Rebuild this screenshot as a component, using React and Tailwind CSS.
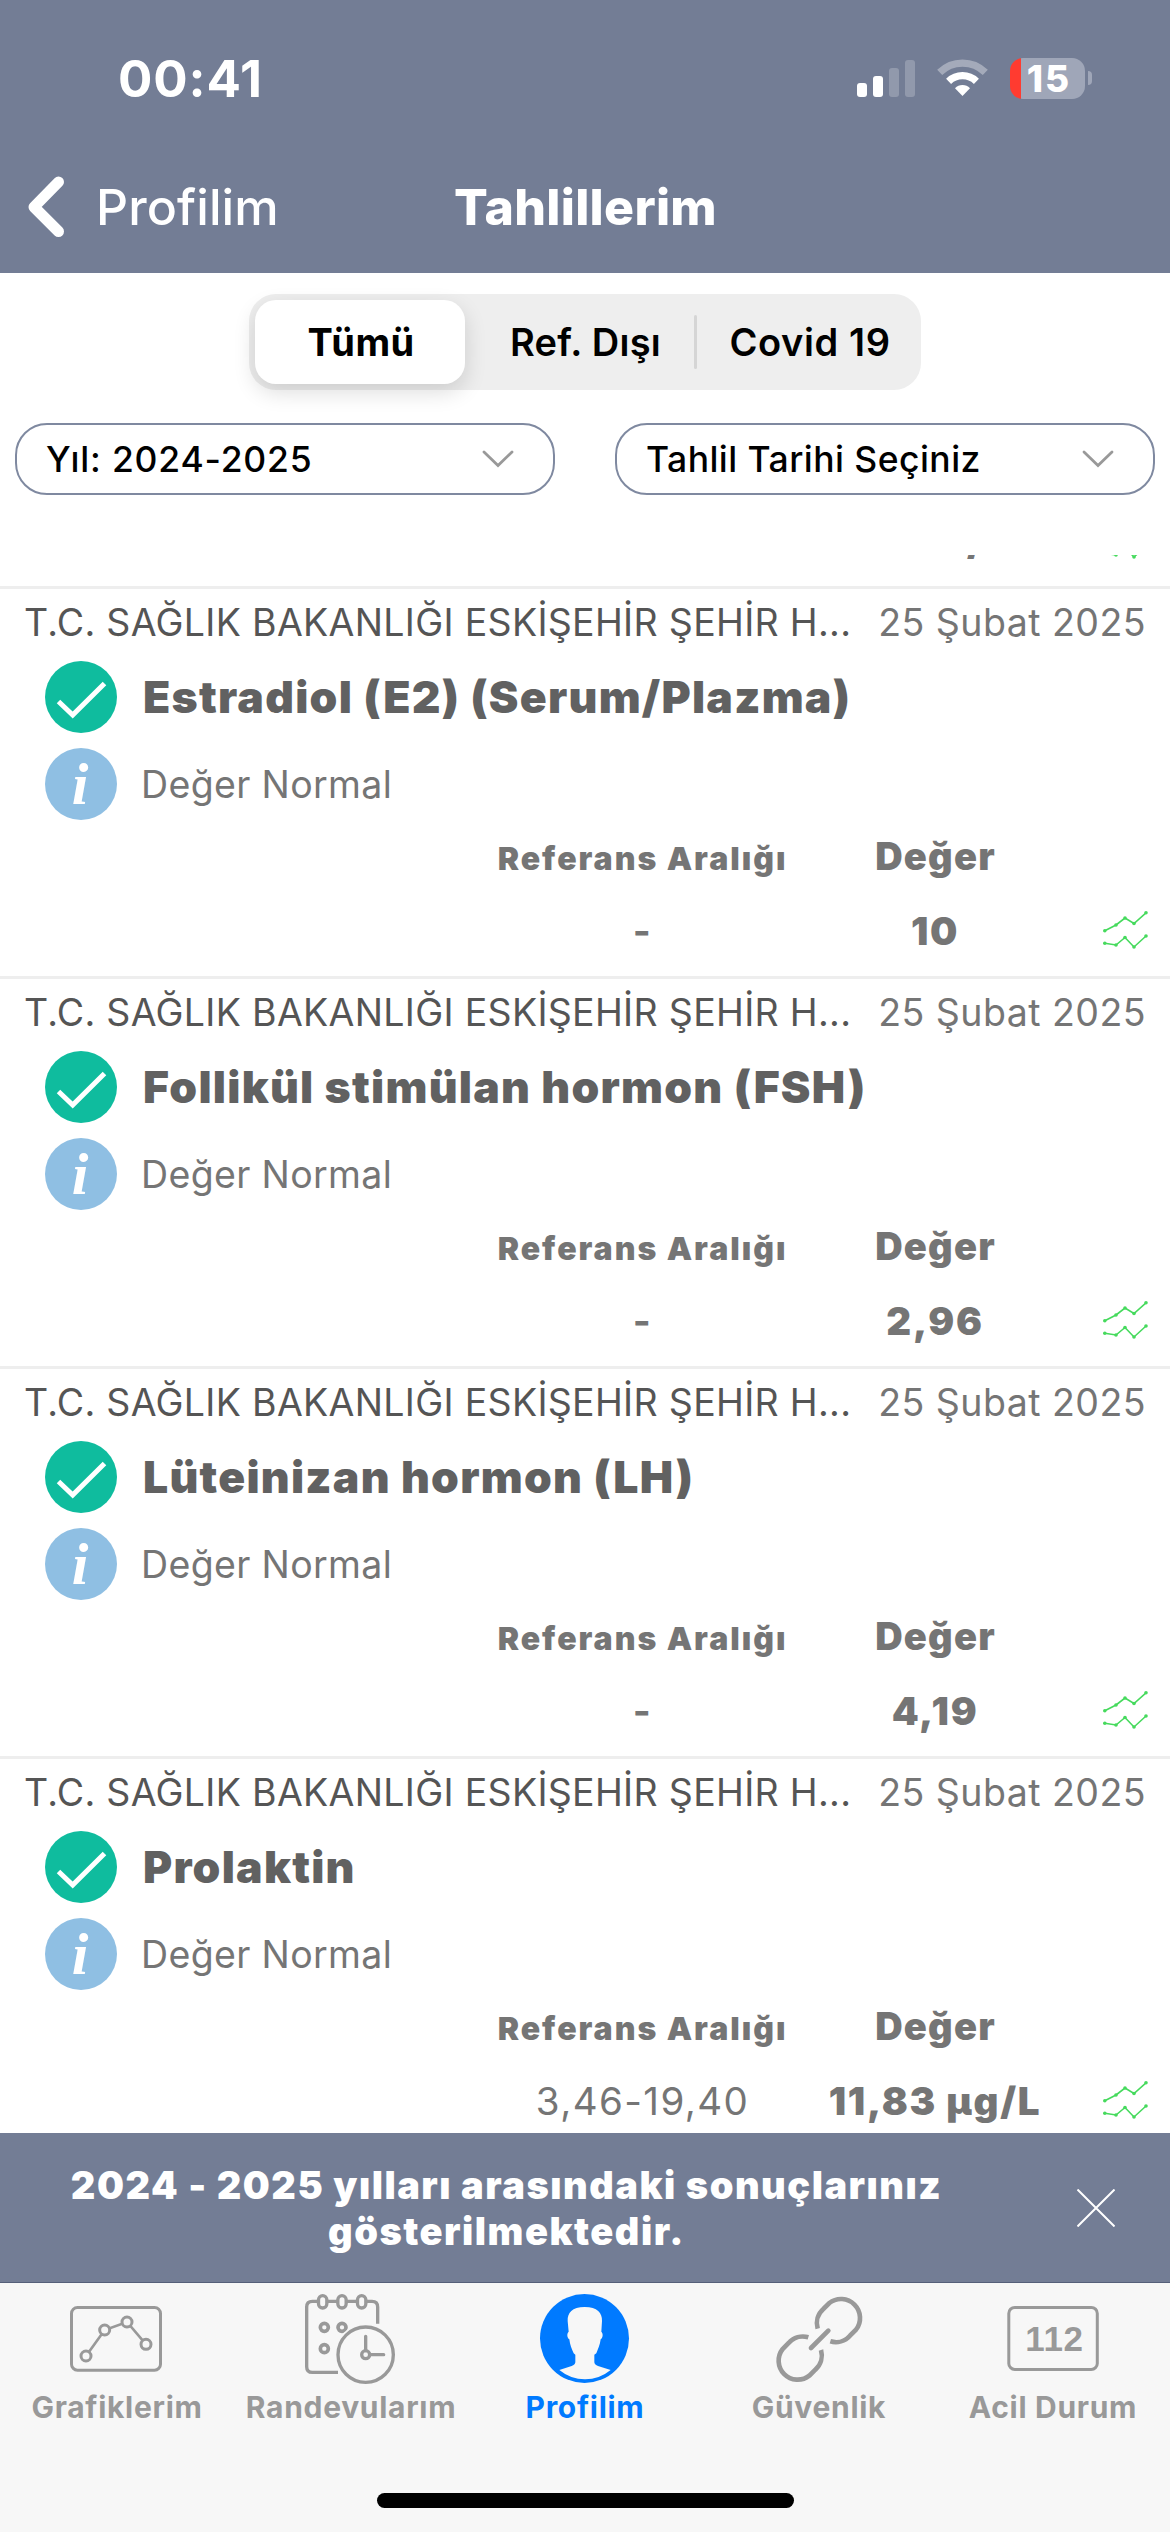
import clsx from "clsx";

const HOSPITAL = "T.C. SAĞLIK BAKANLIĞI ESKİŞEHİR ŞEHİR H...";

const results = [
  { name: "Estradiol (E2) (Serum/Plazma)", date: "25 Şubat 2025", range: "-", value: "10" },
  { name: "Follikül stimülan hormon (FSH)", date: "25 Şubat 2025", range: "-", value: "2,96" },
  { name: "Lüteinizan hormon (LH)", date: "25 Şubat 2025", range: "-", value: "4,19" },
  { name: "Prolaktin", date: "25 Şubat 2025", range: "3,46-19,40", value: "11,83 µg/L" },
];

/* ---------------- ICONS ---------------- */

function SignalIcon() {
  return (
    <svg width="58" height="37" viewBox="0 0 58 37" fill="#fff">
      <rect x="0" y="23" width="10" height="14" rx="3" />
      <rect x="16" y="16" width="10" height="21" rx="3" />
      <rect x="32" y="8" width="10" height="29" rx="3" opacity="0.22" />
      <rect x="48" y="0" width="10" height="37" rx="3" opacity="0.22" />
    </svg>
  );
}

function WifiIcon() {
  return (
    <svg width="51" height="38" viewBox="0 0 51 38" fill="none" stroke="#fff">
      <path d="M2.7 13.4 A32.5 32.5 0 0 1 48.3 13.4" strokeWidth="7.2" opacity="0.35" />
      <path d="M11.6 22.3 A20 20 0 0 1 39.4 22.3" strokeWidth="7.2" />
      <path d="M25.5 37 L18 29.2 A10.6 10.6 0 0 1 33 29.2 Z" fill="#fff" stroke="none" />
    </svg>
  );
}

function SparkIcon() {
  const top = [[1.8, 19.7], [13, 14], [22, 7], [31, 12.5], [43, 1.8]];
  const bottom = [[1.8, 32.2], [13, 34], [22, 26.5], [31, 36], [43, 25]];
  return (
    <svg width="45" height="38" viewBox="0 0 45 38" fill="none" stroke="#46da5d" strokeWidth="1.6">
      <polyline points={top.join(" ")} />
      <polyline points={bottom.join(" ")} />
      {[...top, ...bottom].map(([x, y]) => (
        <circle key={`${x}-${y}`} cx={x} cy={y} r="1.8" fill="#46da5d" stroke="none" />
      ))}
    </svg>
  );
}

function CheckIcon() {
  return (
    <svg width="72" height="72" viewBox="0 0 72 72">
      <circle cx="36" cy="36" r="36" fill="#0fbc9e" />
      <path d="M13.5 40.5 L27.7 54 L59.5 22.5" fill="none" stroke="#fff" strokeWidth="5" />
    </svg>
  );
}

function InfoIcon() {
  return (
    <svg width="72" height="72" viewBox="0 0 72 72">
      <circle cx="36" cy="36" r="36" fill="#8fbfe3" />
      <text
        x="35"
        y="56"
        textAnchor="middle"
        fill="#fff"
        className="font-['Liberation_Serif',serif] text-[60px] font-bold italic"
      >
        i
      </text>
    </svg>
  );
}

function ChartsIcon() {
  return (
    <svg width="100" height="96" viewBox="21 18 300 288" fill="none" stroke="#999" strokeWidth="9">
      <rect x="34.5" y="67.5" width="267" height="188" rx="18" />
      <path d="M78 213 L134 135 L201 111 L258 178" strokeWidth="8" />
      {[[78, 213], [134, 135], [201, 111], [258, 178]].map(([x, y]) => (
        <circle key={x} cx={x} cy={y} r="15" fill="#f7f7f7" />
      ))}
    </svg>
  );
}

function CalendarIcon() {
  return (
    <svg width="100" height="96" viewBox="723 18 300 288" fill="none" stroke="#999" strokeWidth="10">
      <path d="M834 262 H757 Q740 262 740 245 V66 Q740 49 757 49 H936 Q953 49 953 66 V116" />
      {[788, 846, 905].map((x) => (
        <rect key={x} x={x - 12.5} y="32" width="25" height="37" rx="12.5" fill="#f7f7f7" />
      ))}
      {[[793, 127], [846, 127], [793, 191]].map(([x, y]) => (
        <circle key={`${x}-${y}`} cx={x} cy={y} r="12" strokeWidth="11" />
      ))}
      <circle cx="917" cy="209" r="93" fill="#f7f7f7" stroke="none" />
      <circle cx="917" cy="209" r="83" />
      <circle cx="917" cy="209" r="12" />
      <path d="M917 197 V154 M929 209 H971" strokeLinecap="round" />
    </svg>
  );
}

function ProfileIcon() {
  return (
    <svg width="100" height="96" viewBox="45 18 300 288">
      <circle cx="193.5" cy="160.5" r="133.5" fill="#007aff" />
      <path
        d="M194 66 C232 66 247 84 246 108 L244 140 C250 146 249 158 242 163 C240 180 234 192 229 205 L223 209 L223 232 Q224 240 234 243 L272 255 Q238 283 195 283 Q152 283 118 255 L155 243 Q165 240 166 232 L166 209 L161 205 C155 192 150 180 148 163 C141 158 140 146 146 140 L143 108 C142 84 156 66 194 66 Z"
        fill="#f7f7f7"
      />
    </svg>
  );
}

function LinkIcon() {
  return (
    <svg width="100" height="96" viewBox="747 18 300 288" fill="none" stroke="#999" strokeWidth="14">
      <path d="M893 131 A57 57 0 0 1 910 72 L928 54 A57 57 0 0 1 1008 134 L990 152 A57 57 0 0 1 931 169" />
      <path d="M903 195 A57 57 0 0 1 886 254 L868 272 A57 57 0 0 1 788 192 L806 174 A57 57 0 0 1 865 157" />
      <path d="M873 189 L925 137" strokeLinecap="round" />
    </svg>
  );
}

function EmergencyIcon() {
  return (
    <svg width="100" height="96" viewBox="0 0 100 96">
      <rect x="5.8" y="16.4" width="88.5" height="62" rx="6" fill="none" stroke="#999" strokeWidth="3" />
      <text
        x="51.5"
        y="60"
        textAnchor="middle"
        fill="#999"
        className="font-['Liberation_Sans',sans-serif] text-[35px] font-bold"
      >
        112
      </text>
    </svg>
  );
}

/* ---------------- HEADER ---------------- */

function StatusBar() {
  return (
    <div className="flex h-[156px] items-center justify-between pl-[118px] pr-[78px] text-white">
      <span className="text-[51px] font-bold leading-none tracking-[0.9px]">00:41</span>
      <div className="flex items-center">
        <SignalIcon />
        <div className="ml-[22px]">
          <WifiIcon />
        </div>
        <div className="ml-[22px] flex h-[41px] w-[75px] items-center justify-center rounded-[13px] bg-[linear-gradient(90deg,#ff3b30_11px,#9fa6b8_11px)] pl-[3px] text-[37px] font-extrabold leading-[41px] tracking-[2px]">
          15
        </div>
        <div className="ml-[3px] h-[14px] w-1 rounded-r-full bg-[#9fa6b8]" />
      </div>
    </div>
  );
}

function Header() {
  return (
    <header className="h-[273px] bg-[#737d95]">
      <StatusBar />
      <div className="grid h-[102px] grid-cols-3 items-center text-[50px] leading-none text-white">
        <div className="flex items-center pl-7">
          <svg width="37" height="62" viewBox="0 0 37 62" fill="none">
            <path d="M30.5 6 L6 31 L30.5 55.5" stroke="#fff" strokeWidth="11" strokeLinecap="round" strokeLinejoin="round" />
          </svg>
          <span className="ml-[31px] font-medium tracking-[0.1px]">Profilim</span>
        </div>
        <h1 className="pl-px text-center font-extrabold tracking-[0.3px]">Tahlillerim</h1>
      </div>
    </header>
  );
}

/* ---------------- FILTERS ---------------- */

function Select({ label }) {
  return (
    <button className="flex h-[72px] w-[540px] items-center justify-between rounded-[32px] border-2 border-[#7f89a0] bg-white pl-[29px] pr-[39px] text-[35.5px] font-medium leading-none text-black">
      {label}
      <svg width="32" height="18" viewBox="0 0 32 18" fill="none">
        <path d="M2 2 L16 15.5 L30 2" stroke="#999" strokeWidth="2.8" strokeLinecap="round" />
      </svg>
    </button>
  );
}

function Filters() {
  return (
    <section className="flex h-[282px] flex-col items-center pt-[21px]">
      <div className="flex h-24 w-[672px] items-center rounded-[27px] bg-[#eeeeee] px-[6px] text-[38px] leading-none text-black">
        <span className="flex h-[84px] w-[210px] items-center justify-center rounded-[21px] bg-white pl-0.5 font-bold tracking-[0.4px] shadow-[0_8px_22px_rgba(0,0,0,0.14)]">
          Tümü
        </span>
        <span className="flex-1 pl-3 text-center font-semibold tracking-[0.3px]">Ref. Dışı</span>
        <span className="h-[54px] w-[3px] rounded-full bg-[#d5d5d5]" />
        <span className="w-[218px] pl-2 text-center font-semibold tracking-[0.6px]">Covid 19</span>
      </div>
      <div className="mt-[33px] flex w-full justify-between px-[15px]">
        <Select label={<span className="pt-0.5 tracking-[0.8px]">Yıl: 2024-2025</span>} />
        <Select label={<span className="pt-0.5 tracking-[0.45px]">Tahlil Tarihi Seçiniz</span>} />
      </div>
    </section>
  );
}

/* ---------------- RESULT LIST ---------------- */

function ValueRow({ range, value }) {
  return (
    <div className="grid h-[79px] shrink-0 grid-cols-[496px_293px_291px_1fr] text-center text-[38.5px] leading-[68px]">
      <span />
      <span className={clsx("tracking-[1.4px]", range === "-" && "font-bold")}>{range}</span>
      <span className="pl-px font-black tracking-[1.7px]">{value}</span>
      <span className="flex h-[65px] items-center justify-center pl-px">
        <SparkIcon />
      </span>
    </div>
  );
}

function ResultCard({ result }) {
  return (
    <article className="h-[390px] shrink-0 border-t-[3px] border-[#eeeeee] text-[#757575]">
      <div className="flex h-[66px] items-center justify-between pl-[24px] pr-[24px] pt-0.5 text-[37.5px] leading-none">
        <span className="whitespace-nowrap tracking-[0.3px] text-[#555]">{HOSPITAL}</span>
        <span className="whitespace-nowrap tracking-[0.45px]">{result.date}</span>
      </div>
      <div className="mt-[6px] flex h-[72px] items-center gap-[26px] pl-[45px]">
        <CheckIcon />
        <h2 className="text-[44.5px] font-black leading-none tracking-[1.25px] text-[#616161]">{result.name}</h2>
      </div>
      <div className="mt-[15px] flex h-[72px] items-center gap-6 pl-[45px]">
        <InfoIcon />
        <span className="pt-0.5 text-[37.5px] leading-none tracking-[0.35px]">Değer Normal</span>
      </div>
      <div className="grid h-[77px] grid-cols-[496px_293px_291px] items-baseline text-center font-black leading-[73px]">
        <span />
        <span className="text-[32px] tracking-[2px]">Referans Aralığı</span>
        <span className="pl-0.5 text-[38px] tracking-[1.2px]">Değer</span>
      </div>
      <ValueRow range={result.range} value={result.value} />
    </article>
  );
}

function ResultList() {
  return (
    <main className="flex h-[1578px] flex-col overflow-hidden">
      {/* tail of the entry scrolled under the filters */}
      <div className="flex h-[31px] shrink-0 flex-col justify-end overflow-hidden text-[#757575]">
        <ValueRow range="40-70" value="86 IU/L" />
      </div>
      {results.map((result) => (
        <ResultCard key={result.name} result={result} />
      ))}
    </main>
  );
}

/* ---------------- FOOTER ---------------- */

function Banner() {
  return (
    <div className="flex h-[150px] items-center border-b border-[#555f79] bg-[#737d95] text-white">
      <p className="w-[1013px] whitespace-nowrap text-center text-[38px] font-black leading-[46px] tracking-[1.5px]">
        2024 - 2025 yılları arasındaki sonuçlarınız
        <br />
        gösterilmektedir.
      </p>
      <svg className="ml-16" width="38" height="38" viewBox="0 0 38 38" fill="none">
        <path d="M0.5 0.5 L37.5 37.5 M37.5 0.5 L0.5 37.5" stroke="#fff" strokeWidth="2" />
      </svg>
    </div>
  );
}

const tabs = [
  { label: "Grafiklerim", icon: <ChartsIcon /> },
  { label: "Randevularım", icon: <CalendarIcon /> },
  { label: "Profilim", icon: <ProfileIcon />, active: true },
  { label: "Güvenlik", icon: <LinkIcon /> },
  { label: "Acil Durum", icon: <EmergencyIcon /> },
];

function TabBar() {
  return (
    <nav className="flex h-[249px] flex-col items-center bg-[#f7f7f7]">
      <ul className="grid h-[210px] w-full grid-cols-5 pt-2">
        {tabs.map((tab) => (
          <li
            key={tab.label}
            className={clsx(
              "flex flex-col items-center text-[30px] font-bold leading-[40px] tracking-[0.7px]",
              tab.active ? "text-[#007aff]" : "text-[#999]"
            )}
          >
            {tab.icon}
            <span className="whitespace-nowrap">{tab.label}</span>
          </li>
        ))}
      </ul>
      <div className="h-[15px] w-[417px] rounded-full bg-black" />
    </nav>
  );
}

export default function App() {
  return (
    <div className="flex h-[2532px] w-[1170px] flex-col overflow-hidden bg-white font-['Inter',sans-serif]">
      <Header />
      <Filters />
      <ResultList />
      <Banner />
      <TabBar />
    </div>
  );
}
